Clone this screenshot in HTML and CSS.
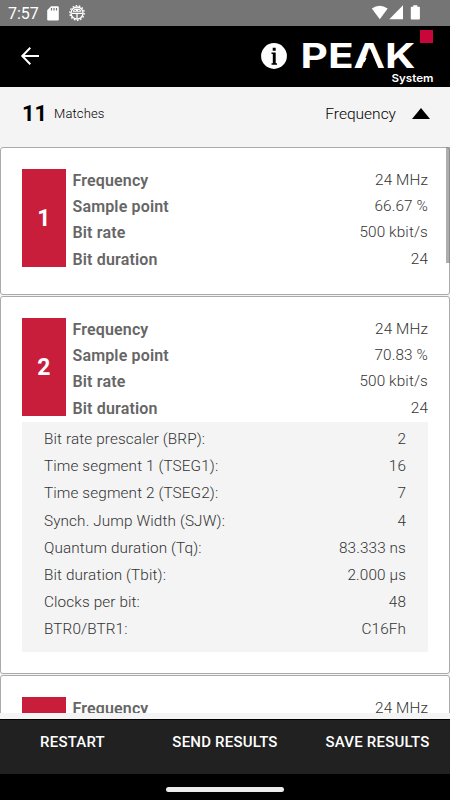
FILE: index.html
```html
<!DOCTYPE html>
<html lang="en">
<head>
  <meta charset="UTF-8">
  <meta name="viewport" content="width=device-width, initial-scale=1.0">
  <title>PEAK System - Matches</title>
  <link rel="stylesheet" href="styles.css">
</head>
<body>
  <div class="status-bar">
    <span class="clock">7:57</span>
    <svg class="sd" width="12" height="15" viewBox="0 0 12 15">
      <path d="M4 .3h6.5q1.3 0 1.3 1.3v11.6q0 1.3-1.3 1.3h-9Q.2 14.500.2 13.200V4.200z" fill="#fff"/>
      <path d="M4.500 2v2.500M7 2v2.500M9.500 2v2.500" stroke="#757575" stroke-width="1.200"/>
    </svg>
    <svg class="bug" width="16" height="16" viewBox="0 0 16 16">
      <circle cx="8" cy="8" r="7.200" fill="none" stroke="#fff" stroke-width="1.400" stroke-dasharray="1.600 1.630"/>
      <circle cx="8" cy="8" r="6" fill="none" stroke="#fff" stroke-width="1.300"/>
      <path d="M3.800 6.800Q4.200 3.500 8 3.500t4.200 3.300z" fill="#fff"/>
      <path d="M2.500 8.300h11M8 8v5.500" stroke="#fff" stroke-width="1.300"/>
      <path d="M5.500 5.500h1.300M9.200 5.500h1.300" stroke="#757575"/>
    </svg>
    <svg class="signals" width="50" height="16" viewBox="0 0 50 16">
      <path d="M.8 3.500Q8.500-1.900 16.700 3.500L8.800 14.200z" fill="#fff"/>
      <path d="M18.300 14.200H32V.3z" fill="#fff"/>
      <path d="M42.300.2h4v1.500h1.800q.8 0 .8.800v11q0 .9-.8.900h-7.500q-.8 0-.8-.9v-11q0-.8.8-.8h1.700z" fill="#fff"/>
    </svg>
  </div>

  <header class="app-bar">
    <svg class="back" width="20" height="20" viewBox="0 0 20 20">
      <path d="M19 10H2.500M10.300 1.800L2.300 10l8 8.200" fill="none" stroke="#fff" stroke-width="2"/>
    </svg>
    <svg class="info" width="26" height="26" viewBox="0 0 26 26">
      <circle cx="13" cy="13" r="12.900" fill="#fff"/>
      <path d="M11.700 4.700h3v3h-3zM10.500 9.500h4.200v10.700h1.300v1.600h-5.500v-1.600h1.300V11h-1.300z" fill="#000"/>
    </svg>
    <svg class="logo" width="134" height="60" viewBox="0 0 134 60">
      <text class="logo-name" x="-.500" y="40.800" textLength="115" lengthAdjust="spacingAndGlyphs">PEAK</text>
      <!-- hides the crossbar of the A -->
      <path d="M69.300 22L60.800 42h17z" fill="#000"/>
      <rect x="119" y="3" width="13" height="13" fill="#c8063a"/>
      <text class="logo-sub" x="90.500" y="55" textLength="42" lengthAdjust="spacingAndGlyphs">System</text>
    </svg>
  </header>

  <div class="matches-bar">
    <span class="count">11</span>
    <span class="label">Matches</span>
    <span class="sort">Frequency</span>
    <svg class="arrow" width="18" height="11" viewBox="0 0 18 11"><path d="M0 11L9 0l9 11z"/></svg>
  </div>

  <main class="results">
    <div class="scrollbar"></div>
    <section class="card">
      <div class="summary">
        <div class="number">1</div>
        <dl class="values">
          <div><dt>Frequency</dt><dd>24 MHz</dd></div>
          <div><dt>Sample point</dt><dd>66.67 %</dd></div>
          <div><dt>Bit rate</dt><dd>500 kbit/s</dd></div>
          <div><dt>Bit duration</dt><dd>24</dd></div>
        </dl>
      </div>
    </section>

    <section class="card open">
      <div class="summary">
        <div class="number">2</div>
        <dl class="values">
          <div><dt>Frequency</dt><dd>24 MHz</dd></div>
          <div><dt>Sample point</dt><dd>70.83 %</dd></div>
          <div><dt>Bit rate</dt><dd>500 kbit/s</dd></div>
          <div><dt>Bit duration</dt><dd>24</dd></div>
        </dl>
      </div>
      <dl class="details">
        <div><dt>Bit rate prescaler (BRP):</dt><dd>2</dd></div>
        <div><dt>Time segment 1 (TSEG1):</dt><dd>16</dd></div>
        <div><dt>Time segment 2 (TSEG2):</dt><dd>7</dd></div>
        <div><dt>Synch. Jump Width (SJW):</dt><dd>4</dd></div>
        <div><dt>Quantum duration (Tq):</dt><dd>83.333 ns</dd></div>
        <div><dt>Bit duration (Tbit):</dt><dd>2.000 µs</dd></div>
        <div><dt>Clocks per bit:</dt><dd>48</dd></div>
        <div><dt>BTR0/BTR1:</dt><dd>C16Fh</dd></div>
      </dl>
    </section>

    <section class="card">
      <div class="summary">
        <div class="number"></div>
        <dl class="values">
          <div><dt>Frequency</dt><dd>24 MHz</dd></div>
        </dl>
      </div>
    </section>
  </main>

  <footer class="actions">
    <button>RESTART</button>
    <button>SEND RESULTS</button>
    <button>SAVE RESULTS</button>
  </footer>
  <div class="nav-bar"><div class="handle"></div></div>
</body>
</html>
```
FILE: styles.css
```css
* {
  box-sizing: border-box;
}

body {
  margin: 0;
  width: 450px;
  height: 800px;
  display: flex;
  flex-direction: column;
  overflow: hidden;
  background: #f4f4f4;
  font-family: Roboto, sans-serif;
}

svg {
  display: block;
  flex: none;
}

.status-bar {
  height: 26px;
  flex: none;
  display: flex;
  align-items: center;
  padding: 0 29px 0 8px;
  background: #757575;
  color: #fff;
}

.clock {
  width: 39px;
  font-size: 16px;
}

.bug {
  margin-left: 10px;
}

.signals {
  margin-left: auto;
}

.app-bar {
  height: 61px;
  flex: none;
  display: flex;
  align-items: center;
  padding: 0 15px 0 20px;
  background: #000;
}

.info {
  margin-left: auto;
  margin-right: 14px;
}

.back, .info {
  margin-bottom: 1px;
}

.logo-name {
  font-family: Inter, Roboto, sans-serif;
  font-size: 34.5px;
  font-weight: 700;
  fill: #fff;
}

.logo-sub {
  font-family: Inter, Roboto, sans-serif;
  font-size: 11px;
  font-weight: 600;
  fill: #fff;
}

.matches-bar {
  height: 60px;
  flex: none;
  display: flex;
  align-items: center;
  padding: 0 20px 7px 22px;
  color: #000;
}

.count {
  width: 32px;
  font-size: 22px;
  font-weight: 700;
}

.label {
  font-size: 13px;
  font-weight: 300;
  letter-spacing: 0.15px;
}

.sort {
  margin-left: auto;
  margin-right: 16px;
  font-size: 15.5px;
  font-weight: 300;
}

.results {
  position: relative;
  height: 565.5px;
  flex: none;
  overflow: hidden;
}

.scrollbar {
  position: absolute;
  top: 0;
  right: 0;
  width: 4px;
  height: 116px;
  background: rgba(120, 120, 120, 0.6);
}

.card {
  height: 148px;
  margin-bottom: 1px;
  padding: 20.5px 21px;
  border: 1px solid #aaa;
  border-radius: 3px;
  background: #fff;
}

.card.open {
  height: 378px;
}

.summary {
  display: flex;
  gap: 7px;
  height: 98.5px;
}

.number {
  width: 43.5px;
  display: flex;
  align-items: center;
  justify-content: center;
  padding-top: 2px;
  background: #c81e3c;
  color: #fff;
  font-size: 23px;
  font-weight: 700;
}

dl, dd {
  margin: 0;
}

dl div {
  display: flex;
  justify-content: space-between;
}

.values {
  flex: 1;
  margin-top: -1px;
  color: #666;
}

.values div {
  line-height: 26.4px;
}

.values dt {
  font-size: 16px;
  font-weight: 600;
  letter-spacing: 0.15px;
}

.values dd {
  position: relative;
  top: -1px;
}

dd, .details {
  font-size: 15.3px;
  font-weight: 300;
  letter-spacing: 0.12px;
  color: #333;
}

.details {
  height: 230px;
  margin-top: 6px;
  padding: 4px 22px 0;
  background: #f4f4f4;
}

.details div {
  line-height: 27.2px;
}

.actions {
  height: 55px;
  flex: none;
  margin-top: 6.5px;
  display: grid;
  grid-template-columns: repeat(3, 1fr);
  gap: 7.5px;
  padding-bottom: 11px;
  border-top: 1px solid #000;
  background: #212121;
}

.actions button {
  padding: 0;
  border: none;
  background: none;
  color: #fff;
  font: 500 15px Roboto, sans-serif;
  letter-spacing: 0.2px;
}

.nav-bar {
  flex: 1;
  display: flex;
  justify-content: center;
  padding-top: 13px;
  background: #000;
}

.handle {
  width: 118px;
  height: 5px;
  border-radius: 3px;
  background: #ececec;
}
```
